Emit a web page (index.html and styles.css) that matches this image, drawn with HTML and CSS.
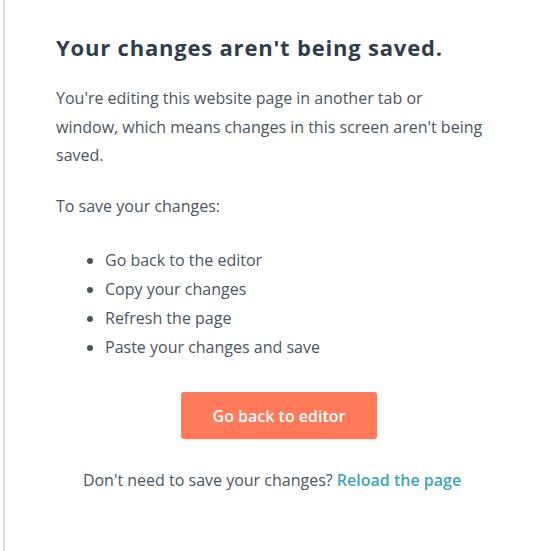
FILE: index.html
```html
<!DOCTYPE html>
<html lang="en">
<head>
  <meta charset="UTF-8">
  <title>Your changes aren't being saved</title>
  <meta name="viewport" content="width=device-width, initial-scale=1.0">
  <link rel="stylesheet" href="styles.css">
</head>
<body>
  <div class="panel">
    <h2 class="titulo">Your changes aren't being saved.</h2>

    <p class="texto">You're editing this website page in another tab or window, which means changes in this screen aren't being saved.</p>

    <p class="texto">To save your changes:</p>

    <ul class="pasos">
      <li>Go back to the editor</li>
      <li>Copy your changes</li>
      <li>Refresh the page</li>
      <li>Paste your changes and save</li>
    </ul>

    <div class="acciones">
      <button class="boton">Go back to editor</button>
    </div>

    <p class="pie">Don't need to save your changes? <a href="#" class="enlace">Reload the page</a></p>
  </div>
</body>
</html>
```

FILE: styles.css
```css
body {
  margin: 0;
  background-color: #fff;
  font-family: 'Open Sans', sans-serif;
  color: #33475b;
}

.panel {
  margin-left: 3px;
  border-left: 2px solid #dcdcdc;
  min-height: 551px;
  box-sizing: border-box;
  padding: 33px 63px 0 51px;
}

.titulo {
  margin: 0;
  font-size: 22px;
  font-weight: 700;
  line-height: 28px;
  letter-spacing: 0.8px;
  color: #2f3e4e;
}

.texto {
  margin: 23px 0 0;
  font-size: 16px;
  line-height: 28.5px;
  color: #4a5560;
}

.texto + .texto {
  margin-top: 22px;
}

.pasos {
  margin: 26px 0 0;
  padding-left: 49px;
  font-size: 16px;
  line-height: 29px;
  color: #4a5560;
}

.acciones {
  display: flex;
  justify-content: center;
  margin-top: 30px;
  padding-left: 14px;
}

.boton {
  width: 196px;
  height: 47px;
  border: none;
  border-radius: 3px;
  background-color: #ff7a59;
  color: #fff;
  font-family: inherit;
  font-size: 16px;
  font-weight: 600;
  cursor: pointer;
}

.pie {
  margin: 27px 0 0;
  text-align: center;
  font-size: 16px;
  line-height: 28px;
  color: #4a5560;
}

.enlace {
  color: #3ea4bf;
  text-decoration: none;
  font-weight: 600;
}
```
